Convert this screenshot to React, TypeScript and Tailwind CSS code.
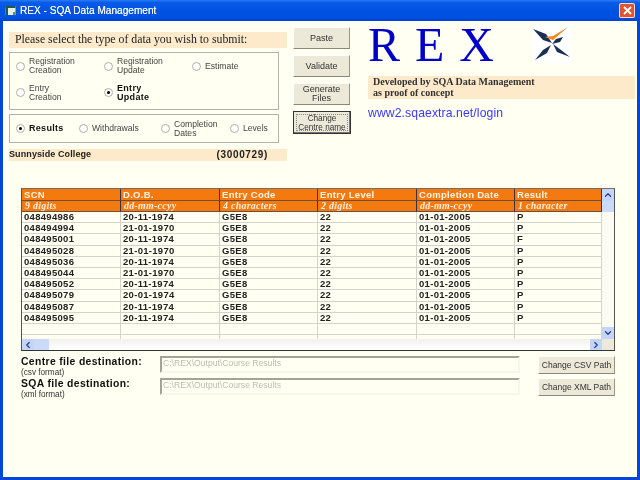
import { ChevronDown, ChevronLeft, ChevronRight, ChevronUp } from "lucide-react";

const rows = [
  ["048494986", "20-11-1974", "P"],
  ["048494994", "21-01-1970", "P"],
  ["048495001", "20-11-1974", "F"],
  ["048495028", "21-01-1970", "P"],
  ["048495036", "20-11-1974", "P"],
  ["048495044", "21-01-1970", "P"],
  ["048495052", "20-11-1974", "P"],
  ["048495079", "20-01-1974", "P"],
  ["048495087", "20-11-1974", "P"],
  ["048495095", "20-11-1974", "P"],
];

const headers = ["SCN", "D.O.B.", "Entry Code", "Entry Level", "Completion Date", "Result"];
const hints = ["9 digits", "dd-mm-ccyy", "4 characters", "2 digits", "dd-mm-ccyy", "1 character"];
const gridCols = "grid grid-cols-[99px_99px_98px_99px_98px_87px]";

function Radio({ label, checked }: { label: string; checked?: boolean }) {
  return (
    <div className="flex items-center gap-[4px]">
      <span className="flex h-[9px] w-[9px] shrink-0 items-center justify-center rounded-full border border-[#b0b0a6] bg-white">
        {checked && <span className="h-[3px] w-[3px] rounded-full bg-black" />}
      </span>
      <span
        className={
          checked
            ? "whitespace-pre-line text-[9px] leading-[9px] font-bold tracking-[0.3px] text-[#111]"
            : "whitespace-pre-line text-[8.6px] leading-[9px] text-[#444]"
        }
      >
        {label}
      </span>
    </div>
  );
}

function SideButton({ label, focused }: { label: string; focused?: boolean }) {
  if (focused) {
    return (
      <div className="h-[23px] w-[58px] border border-[#333] bg-[#ece9d8] p-[2px] shadow-[inset_-1px_-1px_0_#777]">
        <div className="flex h-full items-center justify-center whitespace-pre border border-dotted border-[#888] text-center text-[8.2px] leading-[9px] text-[#333]">
          {label}
        </div>
      </div>
    );
  }
  return (
    <div className="flex h-[22px] w-[57px] items-center justify-center whitespace-pre border border-t-white border-l-white border-r-[#99978a] border-b-[#8a887c] bg-[#ece9d8] text-center text-[9px] leading-[9px] text-[#333]">
      {label}
    </div>
  );
}

function ScrollBtn({ children, className }: { children: React.ReactNode; className: string }) {
  return (
    <div className={"flex items-center justify-center bg-[#c5d5f8] text-[#27408b] " + className}>{children}</div>
  );
}

function PathRow({ title, format, button }: { title: string; format: string; button: string }) {
  return (
    <div className="flex h-[22px] items-start">
      <div className="w-[139px]">
        <div className="text-[10.4px] leading-[11px] font-bold tracking-[0.35px] whitespace-nowrap text-[#111]">{title}</div>
        <div className="mt-[1px] text-[8.2px] leading-[9px] text-[#333]">{format}</div>
      </div>
      <div className="h-[17px] w-[360px] border-2 border-t-[#a3a397] border-l-[#a3a397] border-r-[#f6f6ea] border-b-[#f6f6ea] pl-[1px] text-[8.6px] leading-[10px] text-[#bcbcb2]">
        C:\REX\Output\Course Results
      </div>
      <div className="ml-[18px] flex h-[18px] w-[77px] items-center justify-center whitespace-nowrap border border-t-white border-l-white border-r-[#99978a] border-b-[#8a887c] bg-[#ece9d8] text-[8.5px] text-[#333]">
        {button}
      </div>
    </div>
  );
}

export default function App() {
  return (
    <div className="flex h-[480px] w-[640px] flex-col overflow-hidden bg-[#0047d8] blur-[0.4px] [font-family:'Liberation_Sans',Arial,sans-serif]">
      {/* Title bar */}
      <div className="flex h-[21px] shrink-0 items-center bg-[linear-gradient(180deg,#2a7cf2_0%,#0a5bea_12%,#0053e2_50%,#0050e0_85%,#0043cc_100%)] pl-[5px] pr-[5px]">
        <svg width="11" height="11" viewBox="0 0 11 11">
          <rect x="0.5" y="1" width="10" height="9" fill="#e8f0e0" />
          <rect x="0.5" y="1" width="10" height="2" fill="#1d5a4a" />
          <rect x="0.5" y="1" width="2.5" height="9" fill="#1d5a4a" />
          <rect x="8" y="7" width="2.5" height="3" fill="#6f8f70" />
        </svg>
        <span className="ml-[4px] text-[10.1px] text-[#eef4ff] [text-shadow:0_0_0.6px_#ffffff]">REX - SQA Data Management</span>
        <div className="ml-auto flex h-[15px] w-[16px] items-center justify-center rounded-[2px] border border-white/80 bg-[#e0552f]">
          <svg width="9" height="9" viewBox="0 0 9 9">
            <path d="M1 1 L8 8 M8 1 L1 8" stroke="white" strokeWidth="1.8" />
          </svg>
        </div>
      </div>

      {/* Client area */}
      <div className="mx-[3px] mb-[3px] flex min-h-0 flex-1 flex-col bg-[#fffff2] text-black">
        <div className="flex h-[167px] shrink-0">
          {/* Left panel */}
          <div className="ml-[6px] w-[278px] pt-[11px]">
            <div className="flex h-[16px] items-center bg-[#fdeacb] pl-[6px] text-[11.8px] text-[#222] [font-family:'Liberation_Serif',serif]">
              Please select the type of data you wish to submit:
            </div>
            <div className="mt-[4px] grid h-[58px] w-[270px] grid-cols-[88px_88px_1fr] grid-rows-2 items-center border border-[#b4b4aa] pb-[3px] pl-[6px]">
              <Radio label={"Registration\nCreation"} />
              <Radio label={"Registration\nUpdate"} />
              <Radio label="Estimate" />
              <Radio label={"Entry\nCreation"} />
              <Radio label={"Entry\nUpdate"} checked />
            </div>
            <div className="mt-[4px] grid h-[29px] w-[270px] grid-cols-[63px_82px_69px_1fr] items-center border border-[#b4b4aa] pl-[6px]">
              <Radio label="Results" checked />
              <Radio label="Withdrawals" />
              <Radio label={"Completion\nDates"} />
              <Radio label="Levels" />
            </div>
            <div className="mt-[6px] flex h-[12px] items-center justify-between bg-[#fdeacb] pb-[1px] pr-[19px] text-[9px] font-bold text-[#222]">
              <span className="tracking-[0.1px]">Sunnyside College</span>
              <span className="text-[10px] tracking-[0.65px]">(3000729)</span>
            </div>
          </div>

          {/* Buttons */}
          <div className="ml-[6px] flex w-[58px] flex-col gap-[6px] pt-[6px]">
            <SideButton label="Paste" />
            <SideButton label="Validate" />
            <SideButton label={"Generate\nFiles"} />
            <SideButton label={"Change\nCentre name"} focused />
          </div>

          {/* Right panel */}
          <div className="ml-[17px] w-[267px]">
            <div className="flex h-[55px] items-start">
              <div className="w-[164px] pt-[1px] text-[48px] leading-[46px] tracking-[15px] text-[#0000c8] [font-family:'Liberation_Serif',serif]">
                REX
              </div>
              <svg className="mt-[4px]" width="40" height="38" viewBox="0 0 40 38">
                <rect width="40" height="38" fill="#ffffff" />
                <path d="M1 4 L14 9 L20 18 L11 15 Z" fill="#1b2f55" />
                <path d="M3 35 L11 25 L19 20 L15 28 Z" fill="#1b2f55" />
                <path d="M38 32 L29 25 L21 19 L25 27 Z" fill="#1b2f55" />
                <path d="M31 12 L24 14 L20 19 L28 17 Z" fill="#1b2f55" />
                <path d="M13 12 L21 15 L36 2 L21 11 Z" fill="#f28a1e" />
              </svg>
            </div>
            <div className="h-[23px] bg-[#fdeacb] pl-[5px] text-[10px] leading-[11px] font-bold text-[#333] [font-family:'Liberation_Serif',serif]">
              Developed by SQA Data Management
              <br />
              as proof of concept
            </div>
            <div className="mt-[5px] text-[12.2px] tracking-[0.1px] text-[#3a3af0]">www2.sqaextra.net/login</div>
          </div>
        </div>

        {/* Results table */}
        <div className="ml-[18px] flex h-[163px] w-[594px] shrink-0 flex-col border border-t-[#6e6e6e] border-l-[#555] border-r-[#555] border-b-[#333]">
          <div className="flex min-h-0 flex-1">
            <div className="w-[580px]">
              <div className={gridCols + " h-[12px] bg-[#f47a10] text-[9.5px] leading-[11px] font-bold tracking-[0.3px] text-[#fff4e4]"}>
                {headers.map((h) => (
                  <div key={h} className="border-r border-b border-r-[#40303a] border-b-[#6b5040] pl-[2px]">
                    {h}
                  </div>
                ))}
              </div>
              <div className={gridCols + " h-[11px] bg-[#f47a10] text-[9.9px] leading-[10px] font-bold italic tracking-[0.3px] text-[#ffeedd] [font-family:'Liberation_Serif',serif]"}>
                {hints.map((h, i) => (
                  <div key={i} className="border-r border-b border-r-[#40303a] border-b-[#6b5040] pl-[3px]">
                    {h}
                  </div>
                ))}
              </div>
              {rows.map(([scn, dob, result]) => (
                <div key={scn} className={gridCols + " h-[11.2px] text-[9.5px] leading-[10px] font-bold tracking-[0.3px] text-[#222]"}>
                  {[scn, dob, "G5E8", "22", "01-01-2005", result].map((v, i) => (
                    <div key={i} className="border-r border-b border-[#d4d4cc] pl-[2px]">
                      {v}
                    </div>
                  ))}
                </div>
              ))}
              <div className={gridCols + " h-[11px]"}>
                {headers.map((h) => (
                  <div key={h} className="border-r border-b border-[#d4d4cc]" />
                ))}
              </div>
              <div className={gridCols + " h-[5px]"}>
                {headers.map((h) => (
                  <div key={h} className="border-r border-[#d4d4cc]" />
                ))}
              </div>
            </div>
            {/* Vertical scrollbar */}
            <div className="flex w-[12px] flex-col bg-[#fbfbf3]">
              <ScrollBtn className="h-[12px]">
                <ChevronUp size={10} strokeWidth={3} />
              </ScrollBtn>
              <div className="h-[11px] bg-[#cbdaf8]" />
              <div className="flex-1" />
              <ScrollBtn className="h-[12px]">
                <ChevronDown size={10} strokeWidth={3} />
              </ScrollBtn>
            </div>
          </div>
          {/* Horizontal scrollbar */}
          <div className="flex h-[11px] shrink-0 bg-[linear-gradient(180deg,#f2f2ec,#ffffff)]">
            <ScrollBtn className="w-[12px]">
              <ChevronLeft size={10} strokeWidth={3} />
            </ScrollBtn>
            <div className="w-[15px] bg-[#cbdaf8]" />
            <div className="flex-1" />
            <ScrollBtn className="w-[12px]">
              <ChevronRight size={10} strokeWidth={3} />
            </ScrollBtn>
            <div className="w-[12px] bg-[#ece9d8]" />
          </div>
        </div>

        {/* File destinations */}
        <div className="ml-[18px] mt-[5px] flex flex-col">
          <PathRow title="Centre file destination:" format="(csv format)" button="Change CSV Path" />
          <PathRow title="SQA file destination:" format="(xml format)" button="Change XML Path" />
        </div>
      </div>
    </div>
  );
}
